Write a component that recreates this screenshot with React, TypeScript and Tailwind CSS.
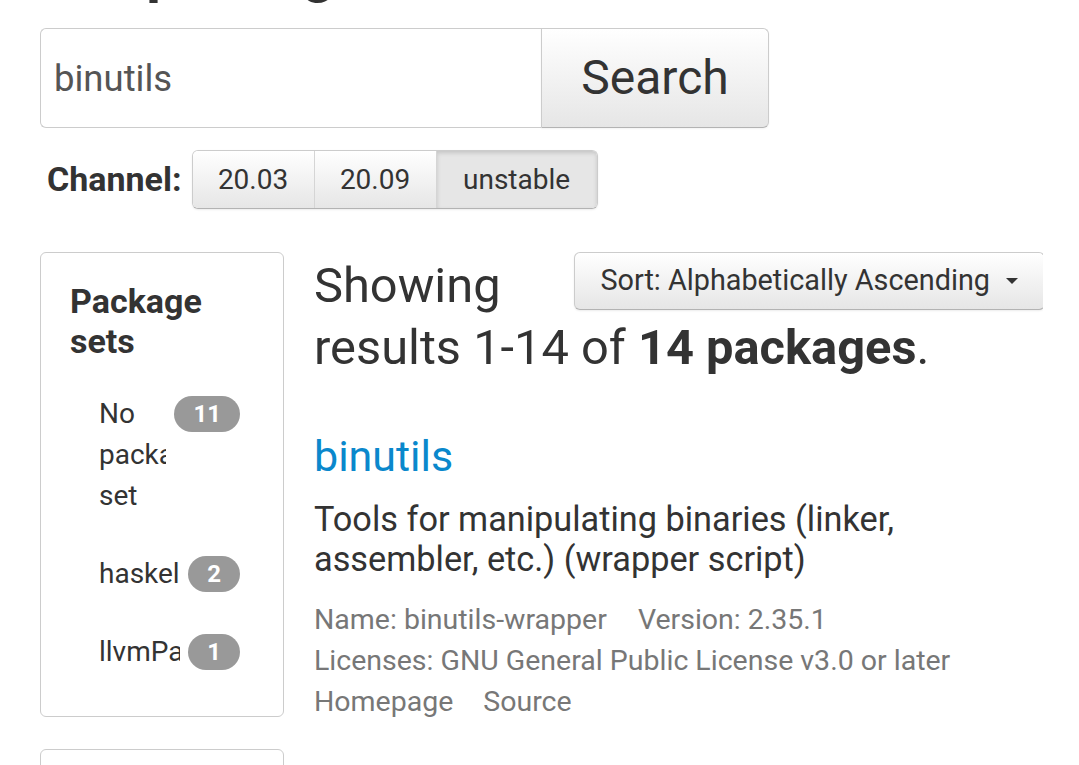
export default function App() {
  const sets = [
    { name: 'No package set', count: 11 },
    { name: 'haskellPackages', count: 2 },
    { name: 'llvmPackages', count: 1 },
  ];

  return (
    <div className="min-h-screen overflow-hidden bg-white pl-[40px] pr-[36px] font-['Roboto','Liberation_Sans',sans-serif] text-[#333]">
      <h1 className="-mt-[58px] pl-[6px] text-[58px] font-bold leading-[58px]">Nix packages</h1>

      {/* search form */}
      <form className="mt-[28px] flex h-[100px]" onSubmit={e => e.preventDefault()}>
        <input
          defaultValue="binutils"
          className="h-full w-[501px] rounded-l-[6px] border border-r-0 border-[#ccc] px-[13px] text-[36.5px] text-[#555] outline-none"
        />
        <button
          type="button"
          className="h-full w-[228px] rounded-r-[6px] border border-[#ccc] border-b-[#b3b3b3] bg-gradient-to-b from-white to-[#e6e6e6] text-[48px] text-[#333] shadow-[0_1px_2px_rgba(0,0,0,0.05)]"
        >
          Search
        </button>
      </form>

      {/* channel selector */}
      <div className="mt-[22px] flex items-center gap-[10px] pl-[7px]">
        <span className="text-[34px] font-bold">Channel:</span>
        <div className="flex h-[59px] overflow-hidden rounded-[6px] border border-[#ccc] border-b-[#b3b3b3] shadow-[0_1px_2px_rgba(0,0,0,0.08)]">
          <button className="w-[122px] border-r border-[#d5d5d5] bg-gradient-to-b from-white to-[#e6e6e6] text-[28px]">20.03</button>
          <button className="w-[122px] border-r border-[#d5d5d5] bg-gradient-to-b from-white to-[#e6e6e6] text-[28px]">20.09</button>
          <button className="w-[160px] bg-[#e6e6e6] text-[28px] shadow-[inset_0_2px_4px_rgba(0,0,0,0.15)]">unstable</button>
        </div>
      </div>

      <div className="mt-[43px] flex items-start">
        {/* sidebar */}
        <aside className="flex w-[244px] shrink-0 flex-col gap-[32px]">
          <div className="rounded-[6px] border border-[#ccc] px-[29px] pt-[28px] pb-[44px]">
            <h2 className="text-[34px] font-bold leading-[40px]">Package sets</h2>
            <ul className="mt-[32px] flex flex-col gap-[37px] pl-[29px] pr-[14px]">
              {sets.map(s => (
                <li key={s.name} className="flex items-start gap-2">
                  <span className="min-w-0 flex-1 overflow-hidden text-[28px] leading-[41px]">{s.name}</span>
                  <span className="mt-[3px] flex h-[36px] items-center rounded-full bg-[#999] px-[19px] text-[24px] font-bold text-white">
                    {s.count}
                  </span>
                </li>
              ))}
            </ul>
          </div>
          <div className="h-[200px] rounded-[6px] border border-[#ccc]" />
        </aside>

        {/* results */}
        <main className="ml-[30px] min-w-0 flex-1 overflow-hidden">
          <div className="float-right -mr-[2px] flex h-[58px] items-center gap-[16px] rounded-[6px] border border-[#ccc] border-b-[#b3b3b3] bg-gradient-to-b from-white to-[#e6e6e6] pl-[25px] pr-[26px] text-[28.8px] shadow-[0_1px_2px_rgba(0,0,0,0.08)]">
            Sort: Alphabetically Ascending
            <span className="h-0 w-0 border-x-[6px] border-t-[6px] border-x-transparent border-t-[#333]" />
          </div>
          <h2 className="mt-[3px] text-[48.8px] leading-[62px]">
            Showing results 1-14 of <b>14 packages</b>.
          </h2>

          <div className="clear-both pt-[52px]">
            <a href="#" className="block text-[43px] leading-[50px] text-[#0a88cc]">binutils</a>
            <p className="mt-[18px] text-[34.3px] leading-[40px]">
              Tools for manipulating binaries (linker, assembler, etc.) (wrapper script)
            </p>
            <div className="mt-[20px] text-[28.5px] leading-[41px] text-[#777]">
              <div className="flex gap-[31px]">
                <span>Name: binutils-wrapper</span>
                <span>Version: 2.35.1</span>
              </div>
              <div>Licenses: GNU General Public License v3.0 or later</div>
              <div className="flex gap-[30px]">
                <a href="#">Homepage</a>
                <a href="#">Source</a>
              </div>
            </div>
          </div>
        </main>
      </div>
    </div>
  );
}
